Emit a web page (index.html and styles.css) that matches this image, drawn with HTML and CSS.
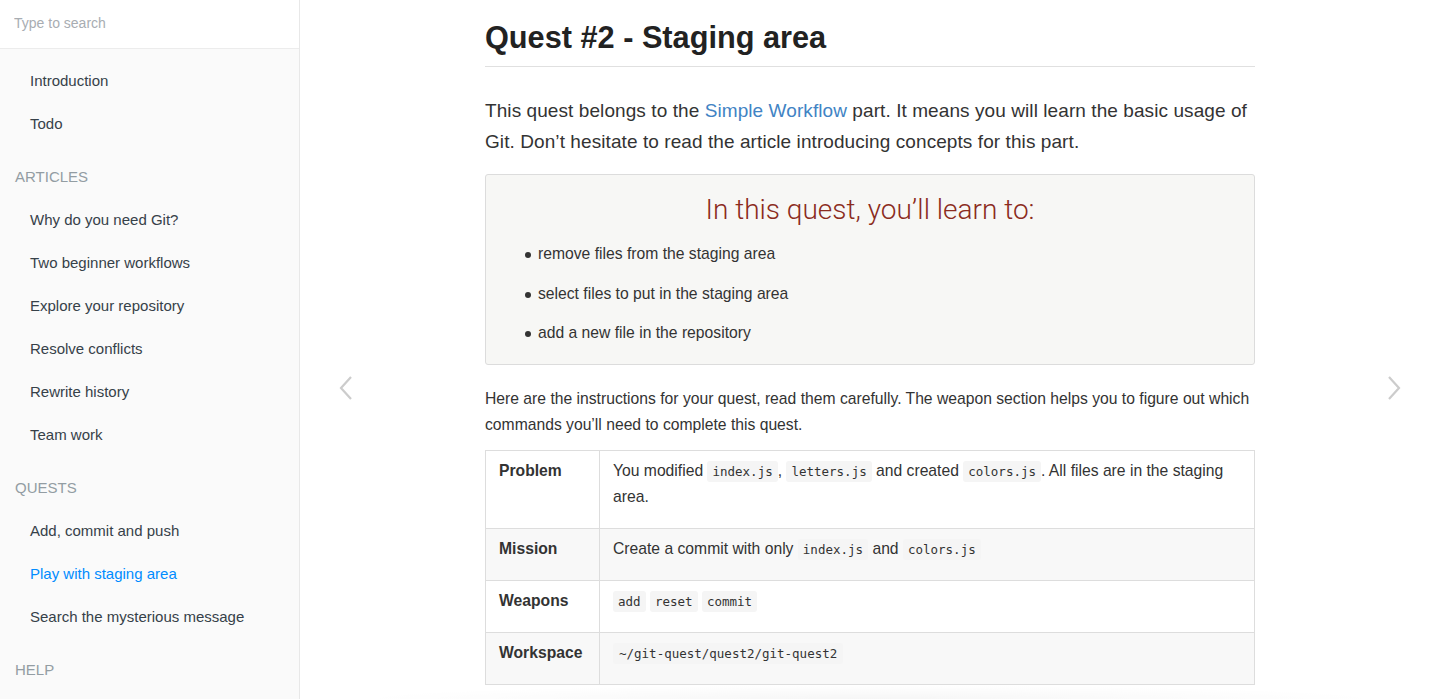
FILE: index.html
```html
<!DOCTYPE html>
<html lang="en">
<head>
<meta charset="utf-8">
<title>Quest #2 - Staging area</title>
<link rel="stylesheet" href="styles.css">
</head>
<body>
<div class="book">
  <nav class="summary">
    <div class="search"><input type="text" placeholder="Type to search"></div>
    <ul class="toc">
      <li class="item">Introduction</li>
      <li class="item">Todo</li>
      <li class="header">Articles</li>
      <li class="item">Why do you need Git?</li>
      <li class="item">Two beginner workflows</li>
      <li class="item">Explore your repository</li>
      <li class="item">Resolve conflicts</li>
      <li class="item">Rewrite history</li>
      <li class="item">Team work</li>
      <li class="header">Quests</li>
      <li class="item">Add, commit and push</li>
      <li class="item active">Play with staging area</li>
      <li class="item">Search the mysterious message</li>
      <li class="header">Help</li>
    </ul>
  </nav>
  <main class="body">
    <a class="nav nav-prev" href="#" aria-label="Previous">
      <svg width="16" height="26" viewBox="0 0 16 26"><path d="M13 2 L3 13 L13 24" fill="none" stroke="#cccccc" stroke-width="2.2"/></svg>
    </a>
    <article class="page">
      <h1 class="title">Quest #2 - Staging area</h1>
      <p class="lead">This quest belongs to the <a href="#">Simple Workflow</a> part. It means you will learn the basic usage of Git. Don’t hesitate to read the article introducing concepts for this part.</p>
      <section class="learn">
        <h2>In this quest, you’ll learn to:</h2>
        <ul>
          <li>remove files from the staging area</li>
          <li>select files to put in the staging area</li>
          <li>add a new file in the repository</li>
        </ul>
      </section>
      <p class="intro">Here are the instructions for your quest, read them carefully. The weapon section helps you to figure out which commands you’ll need to complete this quest.</p>
      <table class="quest">
        <tr>
          <th>Problem</th>
          <td>You modified <code>index.js</code>, <code>letters.js</code> and created <code>colors.js</code>. All files are in the staging area.</td>
        </tr>
        <tr class="alt">
          <th>Mission</th>
          <td>Create a commit with only <code>index.js</code> and <code>colors.js</code></td>
        </tr>
        <tr>
          <th>Weapons</th>
          <td><code>add</code> <code>reset</code> <code>commit</code></td>
        </tr>
        <tr class="alt">
          <th>Workspace</th>
          <td><code class="path">~/git-quest/quest2/git-quest2</code></td>
        </tr>
      </table>
      <div class="fade"></div>
    </article>
    <a class="nav nav-next" href="#" aria-label="Next">
      <svg width="16" height="26" viewBox="0 0 16 26"><path d="M3 2 L13 13 L3 24" fill="none" stroke="#cccccc" stroke-width="2.2"/></svg>
    </a>
  </main>
</div>
</body>
</html>
```
FILE: styles.css
```css
* { box-sizing: border-box; }
html, body { margin: 0; padding: 0; height: 100%; }
body {
  font-family: "Liberation Sans", Arial, sans-serif;
  color: #333;
  background: #fff;
  overflow: hidden;
}
.book { display: flex; height: 699px; }

.summary {
  width: 300px;
  flex: none;
  background: #fafafa;
  border-right: 1px solid #e8e8e8;
  height: 100%;
  overflow: hidden;
}
.search {
  height: 49px;
  background: #fff;
  border-bottom: 1px solid #ececec;
  display: flex;
  align-items: center;
}
.search input {
  border: none;
  outline: none;
  background: transparent;
  width: 100%;
  padding: 0 14px 2px;
  font-family: "Liberation Sans", Arial, sans-serif;
  font-size: 14px;
  color: #333;
}
.search input::placeholder { color: #a8adb2; }
.toc { list-style: none; margin: 0; padding: 10px 0 0; }
.toc li {
  font-size: 15px;
  line-height: 23px;
  padding: 10px 15px;
}
.toc .item { padding-left: 30px; color: #364149; }
.toc .item.active { color: #008cff; }
.toc .header {
  margin-top: 10px;
  color: #939da3;
  text-transform: uppercase;
}

.body {
  flex: 1;
  display: flex;
  align-items: flex-start;
  min-width: 0;
}
.nav {
  flex: none;
  width: 60px;
  align-self: stretch;
  display: flex;
  align-items: center;
  justify-content: center;
  padding-top: 77px;
}
.nav-prev { margin-left: 16px; }
.nav-next { margin-left: auto; margin-right: 5px; }
.page {
  width: 770px;
  flex: none;
  margin-left: 109px;
  padding-top: 16px;
}
.title {
  margin: 0;
  font-size: 30.7px;
  line-height: 44px;
  font-weight: bold;
  color: #222;
  padding-bottom: 6px;
  border-bottom: 1px solid #e0e0e0;
}
.lead {
  margin: 28px 0 0;
  font-size: 19px;
  letter-spacing: 0.08px;
  line-height: 31px;
}
.lead a { color: #4183c4; text-decoration: none; }
.learn {
  margin-top: 17px;
  background: #f7f7f5;
  border: 1px solid #dcdcdc;
  border-radius: 3px;
  padding: 17px 0 10px;
}
.learn h2 {
  margin: 0;
  text-align: center;
  font-family: Roboto, "Liberation Sans", sans-serif;
  font-weight: 300;
  font-size: 28px;
  line-height: 36px;
  color: #8b2b20;
}
.learn ul {
  margin: 7px 0 0;
  padding-left: 52px;
  list-style: none;
}
.learn li {
  position: relative;
  font-size: 15.7px;
  line-height: 24px;
  padding: 7px 0 8.5px;
  color: #333;
}
.learn li::before {
  content: "";
  position: absolute;
  left: -13px;
  top: 17px;
  width: 6px;
  height: 6px;
  border-radius: 50%;
  background: #333;
}
.intro {
  margin: 21px 0 0;
  font-size: 15.7px;
  line-height: 26px;
}
.quest {
  margin-top: 12px;
  width: 100%;
  border-collapse: collapse;
  font-size: 15.7px;
}
.quest th, .quest td {
  border: 1px solid #dddddd;
  text-align: left;
  vertical-align: top;
  padding: 7px 13px 18px;
  line-height: 26px;
}
.quest th { width: 114px; font-weight: bold; color: #333; }
.quest tr.alt { background: #f8f8f8; }
code {
  font-family: "DejaVu Sans Mono", "Liberation Mono", monospace;
  font-size: 12.5px;
  line-height: 1;
  background: #f5f5f5;
  border-radius: 3px;
  padding: 3px 5px;
  color: #333;
}
code.path { padding: 3px 6px; }
.fade {
  height: 14px;
  margin: 0 -135px;
  background: radial-gradient(ellipse 50% 100% at 50% 100%, rgba(0,0,0,0.035), rgba(0,0,0,0));
}
```
